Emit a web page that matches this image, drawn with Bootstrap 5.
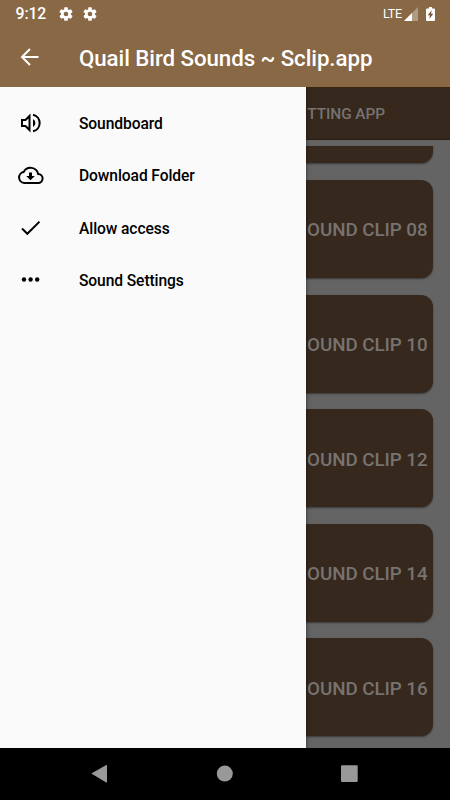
<!DOCTYPE html>
<html lang="en">
<head>
<meta charset="utf-8">
<meta name="viewport" content="width=device-width, initial-scale=1">
<title>Quail Bird Sounds ~ Sclip.app</title>
<link href="https://cdn.jsdelivr.net/npm/bootstrap@5.3.0/dist/css/bootstrap.min.css" rel="stylesheet">
<style>
body{font-family:Roboto,"Liberation Sans",sans-serif;font-weight:500;width:450px;height:800px;background:#000}
svg{display:block;flex:none}
.top-area{height:87px;background:#886845}
.status{height:26px;padding:1px 15px 0 15.5px;font-size:15.8px;line-height:26px}
.clock{width:42px;padding-top:1px;letter-spacing:-.1px}
.lte{font-size:12.5px;font-weight:400;letter-spacing:-.2px}
.signal{margin-left:2px}
.title-row{height:61px;padding:0 0 0 18px}
.app-title{font-size:22.3px;line-height:28px;margin-left:37px;padding-top:2px;letter-spacing:-.07px}
.battery{margin-left:8px}
.middle{height:661px}
.drawer{width:306.4px;background:#fafafa;padding-top:9.5px;color:#000;font-size:15.6px;letter-spacing:-.09px;box-shadow:0 2px 4px rgba(0,0,0,.5);clip-path:inset(0 -8px 0 0);z-index:2}
.menu-row{height:52.5px;padding-left:17px;line-height:20px}
.menu-row span{margin-left:35px;padding-top:2px}
.behind{background:#646464;color:#777371;border-top:1px solid #3a240f}
.tab-strip{height:52px;background:#36281c;font-size:15.4px;letter-spacing:-.05px;border-bottom:1px solid #291d12;padding:3px 0 0 .8px;white-space:nowrap}
.clips{padding:6px 17px 0 0}
.clip{height:98px;margin-bottom:16.6px;background:#36281c;border-radius:0 12px 12px 0;box-shadow:0 1px 2px rgba(0,0,0,.45);font-size:18.8px;letter-spacing:-.05px;padding:3px 5.4px 0 0;white-space:nowrap}
.clip.cut{height:17.4px;border-radius:0 0 12px 0}
.sysnav{height:52px;background:#000}
</style>
<script src="https://cdn.jsdelivr.net/npm/bootstrap@5.3.0/dist/js/bootstrap.bundle.min.js"></script>
</head>
<body class="m-0 overflow-hidden d-flex flex-column">
<header class="top-area text-white">
  <div class="status d-flex align-items-center">
    <span class="clock">9:12</span>
    <div class="d-flex gap-2">
      <svg width="16" height="16" viewBox="0 0 24 24" fill="#fff"><path id="gear" d="M19.43 12.98c.04-.32.07-.64.07-.98s-.03-.66-.07-.98l2.11-1.65c.19-.15.24-.42.12-.64l-2-3.46c-.12-.22-.39-.3-.61-.22l-2.49 1c-.52-.4-1.08-.73-1.69-.98l-.38-2.65A.49.49 0 0 0 14 2h-4c-.25 0-.46.18-.49.42l-.38 2.65c-.61.25-1.17.59-1.69.98l-2.49-1c-.23-.09-.49 0-.61.22l-2 3.46c-.13.22-.07.49.12.64l2.11 1.65c-.04.32-.07.65-.07.98s.03.66.07.98l-2.11 1.65c-.19.15-.24.42-.12.64l2 3.46c.12.22.39.3.61.22l2.49-1c.52.4 1.08.73 1.69.98l.38 2.65c.03.24.24.42.49.42h4c.25 0 .46-.18.49-.42l.38-2.65c.61-.25 1.17-.59 1.69-.98l2.49 1c.23.09.49 0 .61-.22l2-3.46c.12-.22.07-.49-.12-.64l-2.11-1.65zM12 15.5a3.5 3.5 0 1 1 0-7 3.5 3.5 0 0 1 0 7z"/></svg>
      <svg width="16" height="16" viewBox="0 0 24 24" fill="#fff"><use href="#gear"/></svg>
    </div>
    <span class="lte ms-auto">LTE</span>
    <svg class="signal" width="14" height="14" viewBox="0 0 14 14"><path d="M0 14 14 0V14z" fill="#b09b85"/><path d="M0 14 8 6V14z" fill="#fff"/></svg>
    <svg class="battery" width="9" height="14" viewBox="0 0 9 14"><path d="M1 1.4H3V0H6V1.4H8Q9 1.4 9 2.4V13Q9 14 8 14H1Q0 14 0 13V2.4Q0 1.4 1 1.4z" fill="#fff"/><path d="M5.6 3.2 1.8 8.3H3.9L3.4 12 7.2 6.8H5.1z" fill="#76532f"/></svg>
  </div>
  <div class="title-row d-flex align-items-center">
    <svg width="24" height="24" viewBox="0 0 24 24" fill="none" stroke="#fff" stroke-width="2"><path d="M20.5 12H4.5M12 4 4 12l8 8"/></svg>
    <h1 class="app-title mb-0 fw-medium">Quail Bird Sounds ~ Sclip.app</h1>
  </div>
</header>
<main class="middle d-flex">
  <nav class="drawer position-relative flex-shrink-0">
    <div class="menu-row d-flex align-items-center">
      <svg width="27" height="24" viewBox="0 0 27 24" fill="none" stroke="#000" stroke-width="2"><path d="M5 9H8.5L12.5 5V19L8.5 15H5z"/><path d="M16 3.7A8.5 8.5 0 0 1 16 20.3"/><path d="M16 8V16Q18.4 14.7 18.4 12T16 8z" fill="#000" stroke="none"/></svg>
      <span>Soundboard</span>
    </div>
    <div class="menu-row d-flex align-items-center">
      <svg width="27" height="24" viewBox="0 0 27 24" fill="none" stroke="#000" stroke-width="2"><path d="M7.2 20H21A4.4 4.4 0 0 0 21.2 11 7.8 7.8 0 0 0 6.6 9.1 5.5 5.5 0 0 0 7.2 20z"/><path d="M12 9.5H15V13H17.8L13.5 17.3 9.2 13H12z" fill="#000" stroke="none"/></svg>
      <span>Download Folder</span>
    </div>
    <div class="menu-row d-flex align-items-center">
      <svg width="27" height="24" viewBox="0 0 27 24" fill="none" stroke="#000" stroke-width="2"><path d="M5 12.5 10.3 17.8 22.5 5.6"/></svg>
      <span>Allow access</span>
    </div>
    <div class="menu-row d-flex align-items-center">
      <svg width="27" height="24" viewBox="0 0 27 24" fill="#000"><circle cx="7" cy="11.5" r="2.2"/><circle cx="13.6" cy="11.5" r="2.2"/><circle cx="20.2" cy="11.5" r="2.2"/></svg>
      <span>Sound Settings</span>
    </div>
  </nav>
  <section class="behind flex-grow-1 overflow-hidden">
    <div class="tab-strip d-flex align-items-center">TTING APP</div>
    <div class="clips">
      <div class="clip cut"></div>
      <div class="clip d-flex align-items-center justify-content-end">OUND CLIP 08</div>
      <div class="clip d-flex align-items-center justify-content-end">OUND CLIP 10</div>
      <div class="clip d-flex align-items-center justify-content-end">OUND CLIP 12</div>
      <div class="clip d-flex align-items-center justify-content-end">OUND CLIP 14</div>
      <div class="clip d-flex align-items-center justify-content-end">OUND CLIP 16</div>
    </div>
  </section>
</main>
<footer class="sysnav d-flex align-items-center">
  <svg width="450" height="52" viewBox="0 0 450 52" fill="#999"><path d="M91.3 25.6 106.3 17Q107 16.7 107 17.5V34Q107 34.8 106.3 34.4z"/><circle cx="224.8" cy="25.6" r="8"/><rect x="341" y="17.3" width="16.7" height="16.7" rx="1"/></svg>
</footer>
</body>
</html>
